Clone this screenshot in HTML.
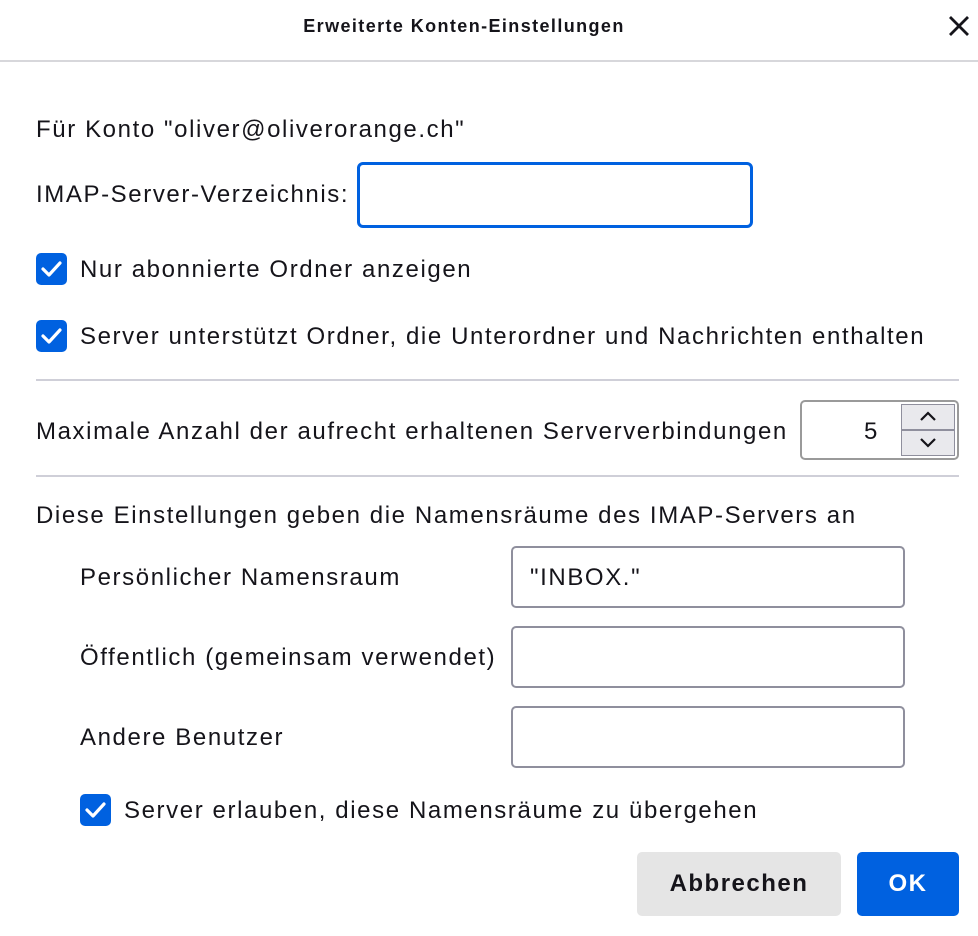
<!DOCTYPE html>
<html><head><meta charset="utf-8"><style>
*{box-sizing:border-box;margin:0;padding:0}
body{width:978px;height:936px;background:#fff;position:relative;overflow:hidden;font-family:"Liberation Sans",sans-serif;color:#15141a;font-size:24px;letter-spacing:1.6px}
.a{position:absolute;white-space:nowrap}
.t{line-height:30px}
.cb{position:absolute;width:31px;height:32px;background:#0061e0;border-radius:5px}
.cb svg{position:absolute;left:5px;top:6px}
.in{position:absolute;border:2px solid #8f8f9d;border-radius:5px;background:#fff}
.hr{position:absolute;height:2px;background:#cfcfd8;left:36px;width:923px}
</style></head><body>
<div class="a" style="left:0;width:928px;top:14px;text-align:center;font-weight:bold;font-size:18px;line-height:24px;letter-spacing:1.4px">Erweiterte Konten-Einstellungen</div>
<svg class="a" style="left:948px;top:15px" width="22" height="22" viewBox="0 0 22 22"><path d="M2 2L20 20M20 2L2 20" stroke="#15141a" stroke-width="2.8"/></svg>
<div class="a" style="left:0;top:60px;width:978px;height:2px;background:#d7d7db"></div>

<div class="a t" style="left:36px;top:115px">Für Konto "oliver@oliverorange.ch"</div>
<div class="a t" style="left:36px;top:180px">IMAP-Server-Verzeichnis:</div>
<div class="a" style="left:357px;top:162px;width:396px;height:66px;border:3px solid #0061e0;border-radius:6px"></div>

<div class="cb" style="left:36px;top:253px"><svg width="21" height="20" viewBox="0 0 21 20"><path d="M2 10L8 16L19 4" stroke="#fff" stroke-width="3.2" fill="none" stroke-linecap="round" stroke-linejoin="round"/></svg></div>
<div class="a t" style="left:80px;top:255px">Nur abonnierte Ordner anzeigen</div>
<div class="cb" style="left:36px;top:320px"><svg width="21" height="20" viewBox="0 0 21 20"><path d="M2 10L8 16L19 4" stroke="#fff" stroke-width="3.2" fill="none" stroke-linecap="round" stroke-linejoin="round"/></svg></div>
<div class="a t" style="left:80px;top:322px">Server unterstützt Ordner, die Unterordner und Nachrichten enthalten</div>

<div class="hr" style="top:379px"></div>
<div class="a t" style="left:36px;top:417px">Maximale Anzahl der aufrecht erhaltenen Serververbindungen</div>
<div class="in" style="left:800px;top:400px;width:159px;height:60px;border-color:#9a9a9a"></div>
<div class="a t" style="left:864px;top:417px">5</div>
<div class="a" style="left:901px;top:404px;width:54px;height:52px;background:#e9e9ed;border:1.5px solid #8f8f9d"></div>
<div class="a" style="left:901px;top:429px;width:54px;height:1.5px;background:#8f8f9d"></div>
<svg class="a" style="left:918px;top:410px" width="20" height="14" viewBox="0 0 20 14"><path d="M3 10L10 3L17 10" stroke="#15141a" stroke-width="2.2" fill="none"/></svg>
<svg class="a" style="left:918px;top:435px" width="20" height="14" viewBox="0 0 20 14"><path d="M3 4L10 11L17 4" stroke="#15141a" stroke-width="2.2" fill="none"/></svg>

<div class="hr" style="top:475px"></div>
<div class="a t" style="left:36px;top:501px">Diese Einstellungen geben die Namensräume des IMAP-Servers an</div>
<div class="a t" style="left:80px;top:563px">Persönlicher Namensraum</div>
<div class="in" style="left:511px;top:546px;width:394px;height:62px"></div>
<div class="a t" style="left:530px;top:563px">"INBOX."</div>
<div class="a t" style="left:80px;top:643px">Öffentlich (gemeinsam verwendet)</div>
<div class="in" style="left:511px;top:626px;width:394px;height:62px"></div>
<div class="a t" style="left:80px;top:723px">Andere Benutzer</div>
<div class="in" style="left:511px;top:706px;width:394px;height:62px"></div>

<div class="cb" style="left:80px;top:794px"><svg width="21" height="20" viewBox="0 0 21 20"><path d="M2 10L8 16L19 4" stroke="#fff" stroke-width="3.2" fill="none" stroke-linecap="round" stroke-linejoin="round"/></svg></div>
<div class="a t" style="left:124px;top:796px">Server erlauben, diese Namensräume zu übergehen</div>

<div class="a" style="left:637px;top:852px;width:204px;height:64px;background:#e5e5e5;border-radius:5px;text-align:center;line-height:64px;font-weight:bold;letter-spacing:1.5px">Abbrechen</div>
<div class="a" style="left:857px;top:852px;width:102px;height:64px;background:#0061e0;border-radius:5px;text-align:center;line-height:64px;font-weight:bold;color:#fff;letter-spacing:1.5px">OK</div>
</body></html>
